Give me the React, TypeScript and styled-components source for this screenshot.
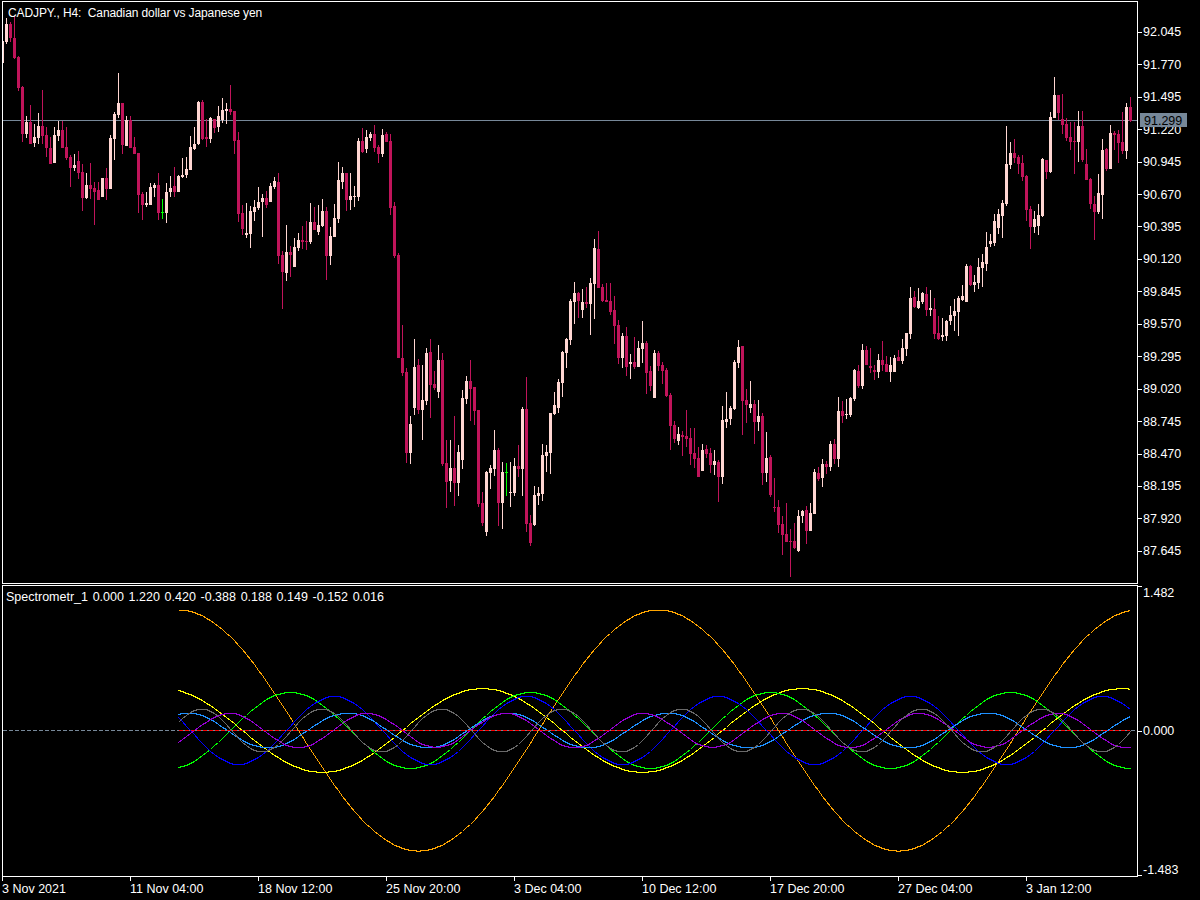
import styled, { createGlobalStyle } from "styled-components";

const PINK = "#ffd6d2";
const CRIMSON = "#c0145a";
const LIME = "#00ff00";
const SLATE = "#778899";

// x kind high bodyTop bodyBottom low, all in page pixels
const CANDLES = `
2 p 41 41 63 63,6 p 18 24 42 44,10 r 22 24 38 42,14 r 16 38 58 59,18 r 56 57 88 91,22 r 86 87 134 142,
26 p 116 122 134 138,30 r 105 122 144 144,34 p 124 137 143 147,38 p 113 126 138 144,42 r 90 126 136 144,
46 r 127 135 148 157,50 r 137 148 164 164,54 p 127 135 163 163,58 p 121 130 136 141,62 r 121 130 148 148,
66 r 127 147 158 160,70 r 155 157 168 187,74 p 154 165 168 171,78 r 151 161 173 179,82 r 164 172 198 211,
86 p 173 185 198 199,90 r 163 185 189 199,94 r 182 188 192 225,98 r 182 190 200 200,102 p 178 178 197 197,
106 r 168 178 189 200,110 p 135 138 189 189,114 p 112 114 139 160,118 p 73 103 115 118,122 r 103 103 145 154,
126 p 116 120 146 146,130 r 116 120 148 148,134 r 137 147 154 154,138 r 153 153 195 213,142 r 192 194 205 220,
146 p 192 203 205 207,150 p 183 187 205 205,154 p 183 185 188 197,158 r 173 185 213 220,162 g 199 212 213 219,
166 p 183 192 213 223,170 p 176 188 192 197,174 r 167 186 192 197,178 p 175 176 192 192,182 p 158 175 177 178,
186 p 157 169 175 178,190 p 136 147 170 170,194 p 127 144 149 150,198 p 101 102 144 145,202 r 100 102 139 140,
206 r 119 137 139 147,210 p 117 118 139 143,214 r 119 119 128 133,218 p 106 116 127 132,222 p 98 110 120 123,
226 p 103 109 111 124,230 r 85 109 112 115,234 r 111 111 141 154,238 r 132 140 214 222,242 r 205 213 229 235,
246 p 203 233 235 238,250 p 206 211 234 248,254 p 200 207 212 221,258 p 187 202 208 210,262 p 194 198 202 237,
266 r 191 198 205 208,270 p 183 186 202 202,274 p 177 181 187 189,278 r 173 182 256 264,282 r 251 255 272 309,
286 p 225 252 273 281,290 r 246 252 255 277,294 p 238 247 267 267,298 p 233 240 248 251,302 r 226 240 242 249,
306 r 221 241 242 250,310 p 203 222 242 244,314 r 207 222 230 230,318 p 205 225 232 235,322 p 199 211 226 227,
326 r 207 211 256 280,330 p 227 236 256 265,334 p 204 218 237 237,338 p 162 180 219 223,342 p 167 173 182 189,
346 r 173 173 200 211,350 p 173 196 200 210,354 p 186 196 197 207,358 p 138 141 197 201,362 r 128 141 152 153,
366 p 130 137 149 153,370 p 132 134 138 141,374 r 125 134 148 152,378 r 145 147 154 163,382 p 129 135 154 157,
386 r 132 134 142 142,390 r 134 141 208 215,394 r 202 206 256 258,398 r 253 255 358 358,402 r 325 358 373 376,
406 r 368 372 453 463,410 p 416 424 453 464,414 p 339 367 408 415,418 r 359 365 410 414,422 p 365 400 410 440,
426 p 348 353 401 405,430 r 339 352 385 418,434 r 371 384 388 390,438 p 345 360 392 398,442 r 353 360 464 466,
446 r 440 463 482 508,450 p 440 468 481 492,454 r 416 468 483 506,458 p 445 452 483 496,462 p 390 398 460 469,
466 p 376 381 399 404,470 r 360 381 389 421,474 r 387 387 411 425,478 r 410 410 504 507,482 r 492 503 523 526,
486 p 471 472 532 536,490 p 465 468 473 489,494 p 430 450 469 476,498 r 448 450 503 526,502 p 462 472 503 529,
506 g 463 472 473 496,510 p 462 492 493 507,514 p 458 466 493 496,518 r 445 466 469 477,522 p 407 409 469 496,
526 r 377 409 524 532,530 r 515 523 543 546,534 p 486 495 525 526,538 p 487 493 496 505,542 p 444 455 494 501,
546 p 445 452 456 472,550 p 413 413 453 474,554 p 392 405 414 415,558 p 379 382 408 413,562 p 351 352 383 397,
566 p 338 339 353 368,570 p 299 301 340 345,574 p 282 293 302 324,578 r 292 293 301 318,582 p 289 302 310 318,
586 r 287 302 304 308,590 p 278 283 304 335,594 p 239 248 284 319,598 r 231 249 288 288,602 r 284 287 301 302,
606 r 283 300 302 302,610 r 283 301 312 315,614 r 296 310 326 344,618 r 320 325 358 364,622 p 333 336 358 368,
626 r 327 336 367 376,630 p 354 362 364 379,634 r 337 362 367 369,638 p 341 348 367 367,642 p 321 343 349 363,
646 r 341 343 373 394,650 r 366 371 386 391,654 p 350 353 398 398,658 r 351 353 366 371,662 r 362 365 371 384,
666 r 368 370 396 397,670 r 393 395 426 450,674 r 421 425 439 443,678 p 427 434 441 445,682 r 431 435 437 456,
686 r 410 436 439 447,690 r 428 438 454 465,694 r 428 453 459 468,698 r 447 458 477 477,702 p 444 450 471 471,
706 r 445 449 454 458,710 r 448 453 465 473,714 p 450 461 465 475,718 r 460 462 477 502,722 p 406 420 477 484,
726 p 392 419 422 428,730 p 406 408 419 425,734 p 360 362 409 410,738 p 340 347 363 368,742 r 346 346 401 435,
746 r 389 400 405 423,750 p 381 404 408 413,754 r 400 404 422 444,758 p 400 416 422 431,762 r 413 416 473 485,
766 p 432 458 473 482,770 r 455 457 495 497,774 r 478 507 508 512,778 r 500 507 525 533,782 r 516 524 535 555,
786 r 503 534 542 542,790 r 529 541 542 577,794 r 523 541 548 549,798 p 510 516 551 552,802 p 510 511 516 523,
806 r 506 510 531 544,810 p 503 513 531 531,814 p 469 472 514 514,818 r 467 473 479 481,822 p 459 464 478 487,
826 r 461 464 467 474,830 p 441 444 467 471,834 r 439 444 459 464,838 p 397 411 459 467,842 r 401 411 416 423,
846 p 399 414 415 419,850 p 397 398 415 417,854 p 369 370 399 401,858 r 365 371 386 388,862 p 344 350 386 389,
866 r 346 350 365 365,870 r 348 366 368 373,874 r 365 370 372 380,878 p 354 360 372 378,882 r 341 360 365 371,
886 r 356 364 372 372,890 p 357 365 372 382,894 p 355 358 372 372,898 r 350 357 361 361,902 p 339 348 361 364,
906 p 333 333 349 356,910 p 287 298 334 339,914 r 291 297 307 308,918 p 288 301 308 309,922 p 292 293 302 304,
926 r 287 294 310 316,930 p 290 308 310 316,934 r 298 309 334 339,938 r 316 333 339 340,942 p 318 335 337 341,
946 p 320 321 336 341,950 p 306 315 321 325,954 p 299 311 316 331,958 p 296 298 312 336,962 p 285 296 300 301,
966 p 264 266 302 302,970 r 265 266 285 286,974 p 275 282 285 292,978 p 258 267 283 289,982 p 254 262 268 287,
986 p 232 247 264 271,990 p 234 241 244 247,994 p 214 221 243 246,998 p 209 214 228 234,1002 p 200 203 216 238,
1006 p 126 164 204 206,1010 p 142 153 165 169,1014 r 139 153 158 163,1018 r 155 157 164 174,1022 r 155 163 177 181,
1026 r 175 176 210 221,1030 r 206 209 227 249,1034 p 211 219 227 233,1038 p 204 215 226 235,1042 p 158 159 216 217,
1046 r 160 160 172 179,1050 p 112 117 172 173,1054 p 77 95 118 118,1058 r 95 95 113 120,1062 r 94 119 125 134,
1066 r 118 124 138 141,1070 r 122 137 142 150,1074 r 122 141 142 174,1078 p 111 126 142 162,1082 r 111 126 160 162,
1086 r 149 164 180 180,1090 r 178 179 204 209,1094 r 196 204 212 240,1098 p 174 193 212 214,1102 p 139 150 195 219,
1106 r 148 149 169 171,1110 p 125 133 169 169,1114 r 131 133 135 150,1118 r 130 134 143 163,1122 r 112 142 151 154,
1126 p 103 107 151 159,1130 r 97 107 121 122
`;

const FILL: Record<string, string> = { p: PINK, r: CRIMSON, g: LIME };

const candles = CANDLES.trim()
  .split(",")
  .map((row) => row.trim().split(" "))
  .map(([x, kind, high, top, bottom, low]) => ({
    x: +x,
    fill: FILL[kind],
    high: +high,
    top: +top,
    bottom: +bottom,
    low: +low,
  }));

const ZERO = 730.5;

// amplitude px, period px, peak x, colour - drawn in indicator buffer order
const WAVES = [
  { amp: 120.5, period: 480, peak: 178, color: "#ffa500" },
  { amp: 42, period: 320, peak: 162, color: "#ffff00" },
  { amp: 38, period: 240, peak: 290, color: LIME },
  { amp: 34, period: 192, peak: 334, color: "#0000ff" },
  { amp: 17.5, period: 160, peak: 347, color: "#1e90ff" },
  { amp: 17, period: 138, peak: 229, color: "#9400d3" },
  { amp: 21.5, period: 120, peak: 201, color: "#696969" },
];

const wavePoints = (amp: number, period: number, peak: number) => {
  const pts: string[] = [];
  for (let x = 178; x <= 1130; x += 4) {
    const y = ZERO - amp * Math.cos((2 * Math.PI * (x - peak)) / period);
    pts.push(`${x + 0.5},${Math.floor(y) + 0.5}`);
  }
  return pts.join(" ");
};

const PRICES = [
  "92.045", "91.770", "91.495", "91.220", "90.945", "90.670", "90.395", "90.120", "89.845",
  "89.570", "89.295", "89.020", "88.745", "88.470", "88.195", "87.920", "87.645",
];

const TIMES = [
  "3 Nov 2021", "11 Nov 04:00", "18 Nov 12:00", "25 Nov 20:00", "3 Dec 04:00",
  "10 Dec 12:00", "17 Dec 20:00", "27 Dec 04:00", "3 Jan 12:00",
];

const App = () => {
  return (
    <Screen>
      <GlobalStyle />
      <MainRow>
        <ChartPane>
          <ChartTitle>{"CADJPY., H4:  Canadian dollar vs Japanese yen"}</ChartTitle>
          <ChartSvg width={1134} height={581} viewBox="3 2 1134 581">
            <rect x={3} y={120} width={1134} height={1} fill={SLATE} />
            {candles.map((c) => (
              <g key={c.x} fill={c.fill}>
                <rect x={c.x} y={c.high} width={1} height={c.low - c.high} />
                <rect x={c.x - 1} y={c.top} width={3} height={Math.max(c.bottom - c.top, 1)} />
              </g>
            ))}
          </ChartSvg>
        </ChartPane>
        <PriceAxis>
          {PRICES.map((p) => (
            <PriceTick key={p}>{p}</PriceTick>
          ))}
          <LastPrice>91.299</LastPrice>
        </PriceAxis>
      </MainRow>
      <SubRow>
        <ChartPane>
          <IndicatorLegend>
            Spectrometr_1 0.000 1.220 0.420 -0.388 0.188 0.149 -0.152 0.016
          </IndicatorLegend>
          <ChartSvg width={1134} height={290} viewBox="3 586 1134 290">
            <line x1={3} x2={1137} y1={730.5} y2={730.5} stroke={SLATE} strokeDasharray="4 2" />
            {WAVES.map((w) => (
              <polyline
                key={w.color}
                points={wavePoints(w.amp, w.period, w.peak)}
                fill="none"
                stroke={w.color}
              />
            ))}
            <line x1={179} x2={1130} y1={730.5} y2={730.5} stroke="#ff0000" strokeDasharray="4 2" />
          </ChartSvg>
        </ChartPane>
        <ScaleAxis>
          <ScaleTick $tick="start">1.482</ScaleTick>
          <ScaleTick $tick="center">0.000</ScaleTick>
          <ScaleTick $tick="end">-1.483</ScaleTick>
        </ScaleAxis>
      </SubRow>
      <TimeAxis>
        {TIMES.map((t) => (
          <TimeTick key={t}>{t}</TimeTick>
        ))}
      </TimeAxis>
    </Screen>
  );
};

export default App;

const GlobalStyle = createGlobalStyle`
  html, body {
    margin: 0;
    background: #000;
  }
`;

const Screen = styled.div`
  width: 1200px;
  height: 900px;
  padding-top: 1px;
  box-sizing: border-box;
  background: #000;
  color: #fff;
  font-family: "Liberation Sans", Arial, sans-serif;
  font-size: 12.5px;
  overflow: hidden;
`;

const MainRow = styled.div`
  display: flex;
  height: 583px;
  margin-bottom: 1px;
  padding-left: 2px;
`;

const SubRow = styled.div`
  display: flex;
  height: 292px;
  padding-left: 2px;
`;

const ChartPane = styled.div`
  position: relative;
  width: 1136px;
  flex: none;
  box-sizing: border-box;
  border: 1px solid #fff;
`;

const ChartSvg = styled.svg`
  display: block;
  shape-rendering: crispEdges;
`;

const ChartTitle = styled.div`
  position: absolute;
  left: 5px;
  top: 4px;
  font-size: 12px;
  letter-spacing: -0.1px;
  line-height: 14px;
  white-space: pre;
`;

const IndicatorLegend = styled.div`
  position: absolute;
  left: 3px;
  top: 4px;
  line-height: 14px;
  word-spacing: 1.2px;
  white-space: pre;
`;

const PriceAxis = styled.div`
  position: relative;
  flex: 1;
  padding-top: 14.6px;
  display: grid;
  grid-auto-rows: 32.44px;
`;

const PriceTick = styled.div`
  position: relative;
  display: flex;
  align-items: center;
  padding: 1px 0 0 5px;
  box-sizing: border-box;

  &::before {
    content: "";
    position: absolute;
    left: 0;
    top: 50%;
    width: 4px;
    height: 1px;
    background: #fff;
  }
`;

const LastPrice = styled.div`
  position: absolute;
  left: 2px;
  top: 112px;
  width: 47px;
  height: 14px;
  padding: 1px 0 0 4px;
  line-height: 14px;
  box-sizing: border-box;
  background: ${SLATE};
  color: #000;
`;

const ScaleAxis = styled.div`
  flex: 1;
  display: flex;
  flex-direction: column;
  justify-content: space-between;
`;

const ScaleTick = styled.div<{ $tick: "start" | "center" | "end" }>`
  position: relative;
  box-sizing: border-box;
  height: 14px;
  line-height: 14px;
  padding: ${({ $tick }) => ($tick === "start" ? "1px" : "0")} 0 0 5px;

  &::before {
    content: "";
    position: absolute;
    left: 0;
    width: 4px;
    height: 1px;
    background: #fff;
    ${({ $tick }) =>
      $tick === "start" ? "top: 1px;" : $tick === "center" ? "top: 7px;" : "bottom: 1px;"}
  }
`;

const TimeAxis = styled.div`
  display: flex;
  padding-left: 2px;
  height: 23px;
`;

const TimeTick = styled.div`
  position: relative;
  width: 128px;
  flex: none;
  padding-top: 5px;
  line-height: 14px;

  &::before {
    content: "";
    position: absolute;
    left: 0;
    top: 0;
    width: 1px;
    height: 4px;
    background: #fff;
  }
`;
